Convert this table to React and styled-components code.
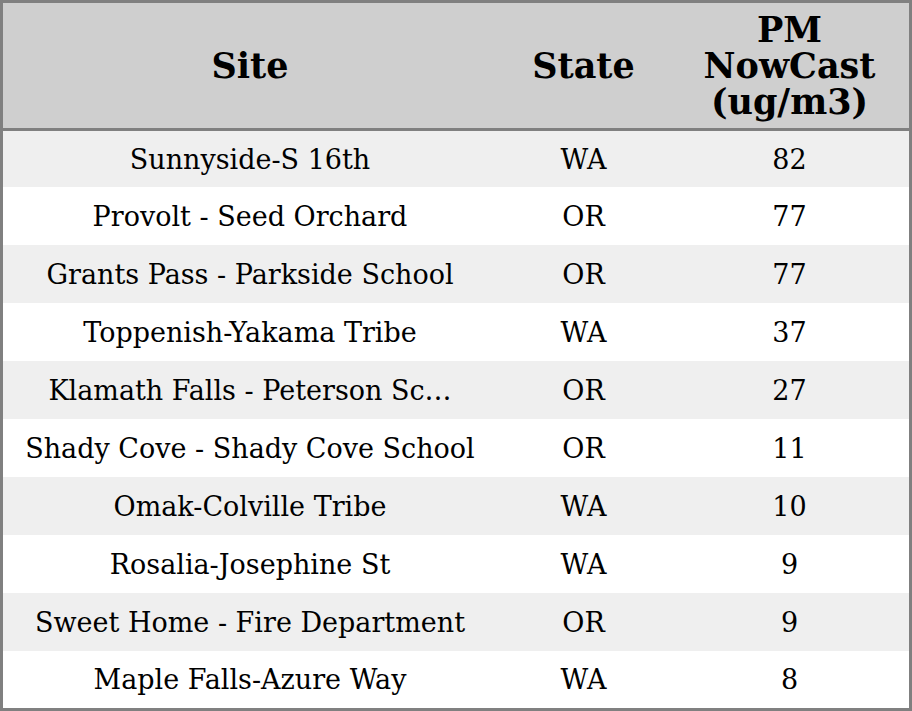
import React from 'react'
import styled, { createGlobalStyle } from 'styled-components'

const GlobalStyle = createGlobalStyle`
    html, body {
        margin: 0;
        padding: 0;
        background: #ffffff;
    }
    * {
        box-sizing: border-box;
    }
`

const Table = styled.div`
    width: 912px;
    height: 711px;
    border: 3px solid #808080;
    display: flex;
    flex-direction: column;
    font-family: "DejaVu Serif", serif;
    color: #000;
`

const Header = styled.div`
    display: grid;
    grid-template-columns: 494px 173px 1fr;
    height: 128px;
    background-color: #cfcfcf;
    border-bottom: 3px solid #808080;
`

const HeadCell = styled.div`
    display: flex;
    flex-direction: column;
    align-items: center;
    justify-content: center;
    text-align: center;
    font-size: 35px;
    font-weight: bold;
    line-height: 36px;
`

const Body = styled.div`
    flex: 1;
    display: grid;
    grid-template-rows: 56px repeat(8, 58px) 1fr;
`

const Row = styled.div`
    display: grid;
    grid-template-columns: 494px 173px 1fr;
    align-items: center;
    background-color: ${({ $shade }) => ($shade ? '#efefef' : '#ffffff')};
`

const Cell = styled.div`
    text-align: center;
    font-size: 27px;
    white-space: nowrap;
    overflow: hidden;
`

const rows = [
    { site: 'Sunnyside-S 16th', state: 'WA', pm: 82 },
    { site: 'Provolt - Seed Orchard', state: 'OR', pm: 77 },
    { site: 'Grants Pass - Parkside School', state: 'OR', pm: 77 },
    { site: 'Toppenish-Yakama Tribe', state: 'WA', pm: 37 },
    { site: 'Klamath Falls - Peterson Sc\u2026', state: 'OR', pm: 27 },
    { site: 'Shady Cove - Shady Cove School', state: 'OR', pm: 11 },
    { site: 'Omak-Colville Tribe', state: 'WA', pm: 10 },
    { site: 'Rosalia-Josephine St', state: 'WA', pm: 9 },
    { site: 'Sweet Home - Fire Department', state: 'OR', pm: 9 },
    { site: 'Maple Falls-Azure Way', state: 'WA', pm: 8 },
]

function App() {
    return (
        <>
            <GlobalStyle />
            <Table>
                <Header>
                    <HeadCell>Site</HeadCell>
                    <HeadCell>State</HeadCell>
                    <HeadCell>
                        <span>PM</span>
                        <span>NowCast</span>
                        <span>(ug/m3)</span>
                    </HeadCell>
                </Header>
                <Body>
                    {rows.map((r, i) => (
                        <Row key={r.site} $shade={i % 2 === 0}>
                            <Cell>{r.site}</Cell>
                            <Cell>{r.state}</Cell>
                            <Cell>{r.pm}</Cell>
                        </Row>
                    ))}
                </Body>
            </Table>
        </>
    )
}

export default App
